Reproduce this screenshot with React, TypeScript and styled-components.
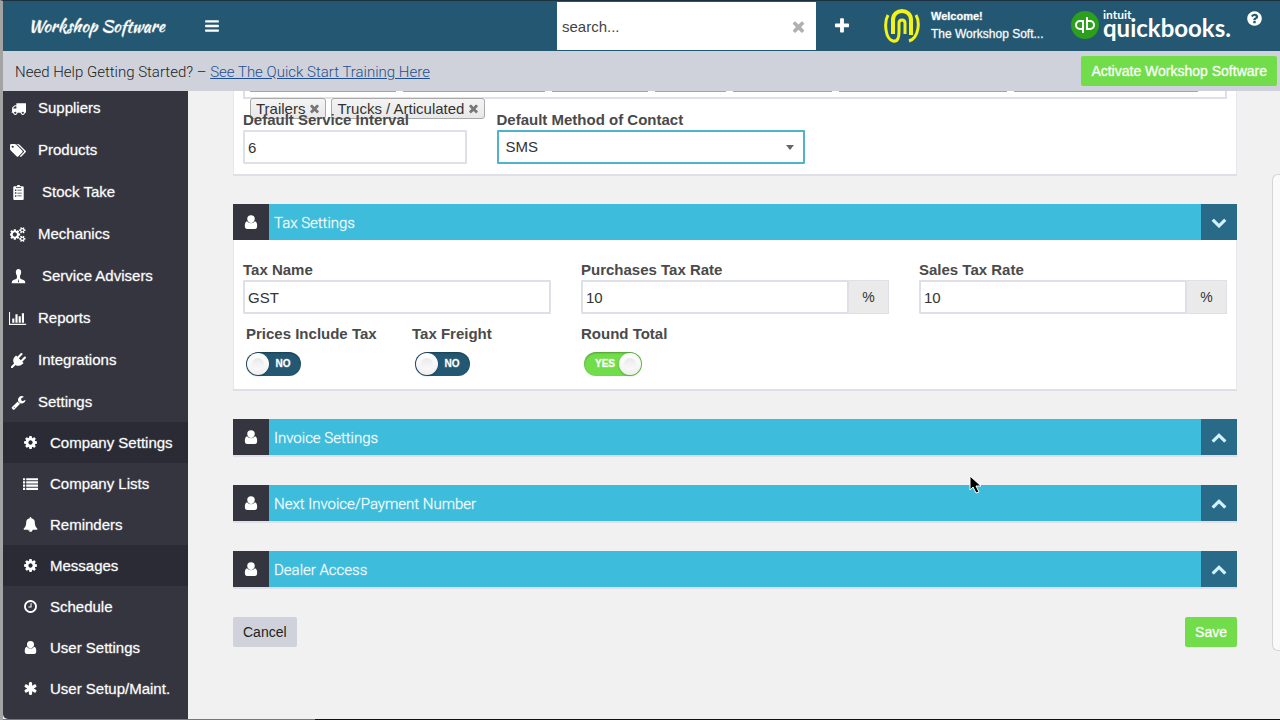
import React, { useState } from "react";
import styled, { createGlobalStyle } from "styled-components";

const c = {
  navy: "#245872",
  bar: "#cfd2da",
  side: "#353540",
  sideDark: "#2a2b35",
  page: "#f1f1f1",
  cyan: "#3dbcdb",
  teal: "#286a87",
  green: "#72dd4a",
  border: "#dfdfe7",
  label: "#4a4a4a",
};

const sans = `"Helvetica Neue", "Liberation Sans", Arial, sans-serif`;
const light = `Roboto, "Liberation Sans", sans-serif`;
/* thickens white text on dark grounds to a medium weight */
const medium = `-webkit-text-stroke: 1px rgba(255, 255, 255, 0.3);`;

const Global = createGlobalStyle`
  *, *::before, *::after { box-sizing: border-box; }
  body { margin: 0; font: 15px/20px ${sans}; color: #333; background: ${c.page}; }
  button, input, select { font: inherit; color: inherit; }
  button { border: 0; padding: 0; cursor: pointer; background: none; }
  svg { flex: none; }
`;

/* ---------- icons ---------- */

const paths: Record<string, string> = {
  user: "M896 130a420 420 0 0 1 420 430q0 190-130 310a420 420 0 0 1-580 0q-130-120-130-310a420 420 0 0 1 420-430zM450 800q180 240 446 240t446-240q244 60 244 520q0 360-256 360h-868q-256 0-256-360q0-460 244-520z",
  bars: "M1664 1344v128q0 26-19 45t-45 19h-1408q-26 0-45-19t-19-45v-128q0-26 19-45t45-19h1408q26 0 45 19t19 45zm0-512v128q0 26-19 45t-45 19h-1408q-26 0-45-19t-19-45v-128q0-26 19-45t45-19h1408q26 0 45 19t19 45zm0-512v128q0 26-19 45t-45 19h-1408q-26 0-45-19t-19-45v-128q0-26 19-45t45-19h1408q26 0 45 19t19 45z",
  plus: "M1600 736v192q0 40-28 68t-68 28h-416v416q0 40-28 68t-68 28h-192q-40 0-68-28t-28-68v-416h-416q-40 0-68-28t-28-68v-192q0-40 28-68t68-28h416v-416q0-40 28-68t68-28h192q40 0 68 28t28 68v416h416q40 0 68 28t28 68z",
  times: "M1490 1322q0 40-28 68l-136 136q-28 28-68 28t-68-28l-294-294-294 294q-28 28-68 28t-68-28l-136-136q-28-28-28-68t28-68l294-294-294-294q-28-28-28-68t28-68l136-136q28-28 68-28t68 28l294 294 294-294q28-28 68-28t68 28l136 136q28 28 28 68t-28 68l-294 294 294 294q28 28 28 68z",
  help: "M1024 1376v-192q0-14-9-23t-23-9h-192q-14 0-23 9t-9 23v192q0 14 9 23t23 9h192q14 0 23-9t9-23zm256-672q0-88-55.5-163t-138.5-116-170-41q-243 0-371 213-15 24 8 42l132 100q7 6 19 6 16 0 25-12 53-68 86-92 34-24 86-24 48 0 85.5 26t37.5 59q0 38-20 61t-68 45q-63 28-115.5 86.5t-52.5 125.5v36q0 14 9 23t23 9h192q14 0 23-9t9-23q0-19 21.5-49.5t54.5-49.5q32-18 49-28.5t46-35 44.5-48 28-60.5 12.5-81zm384 192q0 209-103 385.5t-279.5 279.5-385.5 103-385.5-103-279.5-279.5-103-385.5 103-385.5 279.5-279.5 385.5-103 385.5 103 279.5 279.5 103 385.5z",
  cog: "M1152 896q0-106-75-181t-181-75-181 75-75 181 75 181 181 75 181-75 75-181zm512-109v222q0 12-8 23t-20 13l-185 28q-19 54-39 91 35 50 107 138 10 12 10 25t-9 23q-27 37-99 108t-94 71q-12 0-26-9l-138-108q-44 23-91 38-16 136-29 186-7 28-36 28h-222q-14 0-24.5-8.5t-11.5-21.5l-28-184q-49-16-90-37l-141 107q-10 9-25 9-14 0-25-11-126-114-165-168-7-10-7-23 0-12 8-23 15-21 51-66.5t54-70.5q-27-50-41-99l-183-27q-13-2-21-12.5t-8-23.5v-222q0-12 8-23t19-13l186-28q14-46 39-92-40-57-107-138-10-12-10-24 0-10 9-23 26-36 98.5-107.5t94.5-71.5q13 0 26 10l138 107q44-23 91-38 16-136 29-186 7-28 36-28h222q14 0 24.5 8.5t11.5 21.5l28 184q49 16 90 37l142-107q9-9 24-9 13 0 25 10 129 119 165 170 7 8 7 22 0 12-8 23-15 21-51 66.5t-54 70.5q26 50 41 98l183 28q13 2 21 12.5t8 23.5z",
  truck: "M640 1408q0-52-38-90t-90-38-90 38-38 90 38 90 90 38 90-38 38-90zm-384-512h384v-256h-158q-13 0-22 9l-195 195q-9 9-9 22v30zm1280 512q0-52-38-90t-90-38-90 38-38 90 38 90 90 38 90-38 38-90zm256-1088v1024q0 15-4 26.5t-13.5 18.5-16.5 11.5-23.5 6-22.5 2-25.5 0-22.5-.5q0 106-75 181t-181 75-181-75-75-181h-384q0 106-75 181t-181 75-181-75-75-181h-64q-3 0-22.5.5t-25.5 0-22.5-2-23.5-6-16.5-11.5-13.5-18.5-4-26.5q0-26 19-45t45-19v-320q0-8-.5-35t0-38 2.5-34.5 6.5-37 14-30.5 22.5-30l198-198q19-19 50.5-32t58.5-13h160v-192q0-26 19-45t45-19h1024q26 0 45 19t19 45z",
  tags: "M448 448q0-53-37.5-90.5t-90.5-37.5-90.5 37.5-37.5 90.5 37.5 90.5 90.5 37.5 90.5-37.5 37.5-90.5zm1067 576q0 53-37 90l-491 492q-39 37-91 37-53 0-90-37l-715-716q-38-37-64.5-101t-26.5-117v-416q0-52 38-90t90-38h416q53 0 117 26.5t102 64.5l715 714q37 39 37 91zm384 0q0 53-37 90l-491 492q-39 37-91 37-36 0-59-14t-53-45l470-470q37-37 37-90 0-52-37-91l-715-714q-38-38-102-64.5t-117-26.5h224q53 0 117 26.5t102 64.5l715 714q37 39 37 91z",
  cogs: "M832 896q0-106-75-181t-181-75-181 75-75 181 75 181 181 75 181-75 75-181zm768 512q0-52-38-90t-90-38-90 38-38 90q0 53 37.5 90.5t90.5 37.5 90.5-37.5 37.5-90.5zm0-1024q0-52-38-90t-90-38-90 38-38 90q0 53 37.5 90.5t90.5 37.5 90.5-37.5 37.5-90.5zm-384 421v185q0 10-7 19.5t-16 10.5l-155 24q-11 35-32 76 34 48 90 115 7 10 7 20 0 12-7 19-23 30-82.5 89.5t-78.5 59.5q-11 0-21-7l-115-90q-37 19-77 31-11 108-23 155-7 24-30 24h-186q-11 0-20-7.5t-10-17.5l-23-153q-34-10-75-31l-118 89q-7 7-20 7-11 0-21-8-144-133-144-160 0-9 7-19 10-14 41-53t47-61q-23-44-35-82l-152-24q-10-1-17-9.5t-7-19.5v-185q0-10 7-19.5t16-10.5l155-24q11-35 32-76-34-48-90-115-7-11-7-20 0-12 7-20 22-30 82-89t79-59q11 0 21 7l115 90q34-18 77-32 11-108 23-154 7-24 30-24h186q11 0 20 7.5t10 17.5l23 153q34 10 75 31l118-89q8-7 20-7 11 0 21 8 144 133 144 160 0 9-7 19-12 16-42 54t-45 60q23 48 34 82l152 23q10 2 17 10.5t7 19.5zm640 533v140q0 16-149 31-12 27-30 52 51 113 51 138 0 4-4 7-122 71-124 71-8 0-46-47t-52-68q-20 2-30 2t-30-2q-14 21-52 68t-46 47q-2 0-124-71-4-3-4-7 0-25 51-138-18-25-30-52-149-15-149-31v-140q0-16 149-31 13-29 30-52-51-113-51-138 0-4 4-7 4-2 35-20t59-34 30-16q8 0 46 46.5t52 67.5q20-2 30-2t30 2q51-71 92-112l6-2q4 0 124 70 4 3 4 7 0 25-51 138 17 23 30 52 149 15 149 31zm0-1024v140q0 16-149 31-12 27-30 52 51 113 51 138 0 4-4 7-122 71-124 71-8 0-46-47t-52-68q-20 2-30 2t-30-2q-14 21-52 68t-46 47q-2 0-124-71-4-3-4-7 0-25 51-138-18-25-30-52-149-15-149-31v-140q0-16 149-31 13-29 30-52-51-113-51-138 0-4 4-7 4-2 35-20t59-34 30-16q8 0 46 46.5t52 67.5q20-2 30-2t30 2q51-71 92-112l6-2q4 0 124 70 4 3 4 7 0 25-51 138 17 23 30 52 149 15 149 31z",
  chart: "M640 896v512h-256v-512h256zm384-512v1024h-256v-1024h256zm1024 1152v128h-2048v-1536h128v1408h1920zm-640-896v768h-256v-768h256zm384-384v1152h-256v-1152h256z",
  plug: "M1755 453q37 38 37 90.5t-37 90.5l-401 400 150 150-160 160q-163 163-389.5 186.5t-411.5-100.5l-362 362h-181v-181l362-362q-124-185-100.5-411.5t186.5-389.5l160-160 150 150 400-401q38-37 91-37t90 37 37 90.5-37 90.5l-400 401 234 234 401-400q38-37 91-37t90 37z",
  wrench: "M448 1472q0-26-19-45t-45-19-45 19-19 45 19 45 45 19 45-19 19-45zm644-420l-682 682q-37 37-90 37-52 0-91-37l-106-108q-38-36-38-90 0-53 38-91l681-681q39 98 114.5 173.5t173.5 114.5zm634-435q0 39-23 106-47 134-164.5 217.5t-258.5 83.5q-185 0-316.5-131.5t-131.5-316.5 131.5-316.5 316.5-131.5q58 0 121.5 16.5t107.5 46.5q16 11 16 28t-16 28l-293 169v224l193 107q5-3 79-48.5t135.5-81 70.5-35.5q15 0 23.5 10t8.5 25z",
  list: "M0 256h256v256h-256zM384 256h1408v256h-1408zM0 640h256v256h-256zM384 640h1408v256h-1408zM0 1024h256v256h-256zM384 1024h1408v256h-1408zM0 1408h256v256h-256zM384 1408h1408v256h-1408z",
  bell: "M912 1696q0-16-16-16-59 0-101.5-42.5t-42.5-101.5q0-16-16-16t-16 16q0 73 51.5 124.5t124.5 51.5q16 0 16-16zm816-288q0 52-38 90t-90 38h-448q0 106-75 181t-181 75-181-75-75-181h-448q-52 0-90-38t-38-90q50-42 91-88t85-119.5 74.5-158.5 50-206 19.5-260q0-152 117-282.5t307-158.5q-8-19-8-39 0-40 28-68t68-28 68 28 28 68q0 20-8 39 190 28 307 158.5t117 282.5q0 139 19.5 260t50 206 74.5 158.5 85 119.5 91 88z",
  clock: "M1024 544v448q0 14-9 23t-23 9h-320q-14 0-23-9t-9-23v-64q0-14 9-23t23-9h224v-352q0-14 9-23t23-9h64q14 0 23 9t9 23zm416 352q0-148-73-273t-198-198-273-73-273 73-198 198-73 273 73 273 198 198 273 73 273-73 198-198 73-273zm224 0q0 209-103 385.5t-279.5 279.5-385.5 103-385.5-103-279.5-279.5-103-385.5 103-385.5 279.5-279.5 385.5-103 385.5 103 279.5 279.5 103 385.5z",
  asterisk: "M1546 1050q46 26 59.5 77.5t-12.5 97.5l-64 110q-26 46-77.5 59.5t-97.5-12.5l-266-153v307q0 52-38 90t-90 38h-128q-52 0-90-38t-38-90v-307l-266 153q-46 26-97.5 12.5t-77.5-59.5l-64-110q-26-46-12.5-97.5t59.5-77.5l266-154-266-154q-46-26-59.5-77.5t12.5-97.5l64-110q26-46 77.5-59.5t97.5 12.5l266 153v-307q0-52 38-90t90-38h128q52 0 90 38t38 90v307l266-153q46-26 97.5-12.5t77.5 59.5l64 110q26 46 12.5 97.5t-59.5 77.5l-266 154z",
  down: "M1683 808l-742 741q-19 19-45 19t-45-19l-742-741q-19-19-19-45.5t19-45.5l166-165q19-19 45-19t45 19l531 531 531-531q19-19 45-19t45 19l166 165q19 19 19 45.5t-19 45.5z",
  up: "M1683 1331l-166 165q-19 19-45 19t-45-19l-531-531-531 531q-19 19-45 19t-45-19l-166-165q-19-19-19-45.5t19-45.5l742-741q19-19 45-19t45 19l742 741q19 19 19 45.5t-19 45.5z",
  clipboard:
    "M740 0h312v150h340q128 0 128 128v1386q0 128-128 128h-992q-128 0-128-128v-1386q0-128 128-128h340zM600 230v110h592v-110zM470 540v170h170v-170zM760 580v90h520v-90zM470 880v170h170v-170zM760 920v90h520v-90zM470 1220v170h170v-170zM760 1260v90h520v-90z",
  adviser:
    "M896 0q330 20 320 400q-20 280-130 400q-30 160 20 330q100 110 400 190q200 70 206 380h-1632q6-310 206-380q300-80 400-190q50-170 20-330q-110-120-130-400q-10-380 320-400zM870 1240l-40 340h132l-40-340z",
};

const boxes: Record<string, string> = {
  tags: "0 0 1920 1792",
  cogs: "0 0 1920 1792",
  chart: "0 0 2048 1792",
};

const Icon = ({ name, size = 15 }: { name: string; size?: number }) => (
  <svg height={size} viewBox={boxes[name] ?? "0 0 1792 1792"} fill="currentColor" fillRule="evenodd" aria-hidden="true">
    <path d={paths[name]} />
  </svg>
);

/* ---------- frame ---------- */

const Page = styled.div`
  height: 100vh;
  display: flex;
  flex-direction: column;
  overflow: hidden;
  border-top: 1px solid #1c3040;
  border-left: 3px solid #a3a3a3;
`;

const BottomEdge = styled.div`
  flex: none;
  height: 1px;
  background: linear-gradient(to right, #777 312px, #111 312px);
`;

const Header = styled.header`
  flex: none;
  height: 50px;
  display: flex;
  align-items: center;
  color: #fff;
  background: ${c.navy};
`;

const Brand = styled.a`
  width: 140px;
  margin-left: 25px;
  font: 400 17px/24px "Kaushan Script", Lato, sans-serif;
  color: #fff;
  text-decoration: none;
  white-space: nowrap;
  ${medium}
`;

const IconButton = styled.button`
  display: flex;
  align-items: center;
  justify-content: center;
  width: 16px;
  height: 16px;
`;

const MenuButton = styled(IconButton)`
  margin-left: 36px;
`;

const HeaderRight = styled.div`
  display: flex;
  align-items: center;
  margin-left: auto;
`;

const Search = styled.div`
  display: flex;
  align-items: center;
  width: 259px;
  height: 48px;
  padding: 0 10px 0 5px;
  margin-right: 18px;
  background: #fff;
  color: #b0b0b0;
`;

const SearchInput = styled.input`
  flex: 1;
  min-width: 0;
  padding: 2px 0 0;
  border: 0;
  outline: 0;
  background: none;
  color: #444;
  &::placeholder {
    color: #444;
    opacity: 1;
  }
`;

const Account = styled.div`
  display: flex;
  align-items: center;
  gap: 11px;
  width: 169px;
  margin-left: 34px;
`;

const AccountText = styled.div`
  padding-bottom: 2px;
  font-size: 12px;
  line-height: 18px;
  ${medium}
  strong {
    display: block;
    font-size: 11px;
  }
`;

const QuickBooks = styled.div`
  display: flex;
  align-items: center;
  gap: 4px;
  width: 160px;
  margin-left: 18px;
  padding-bottom: 2px;
  font-family: Lato, sans-serif;
`;

const QbWords = styled.div`
  display: flex;
  flex-direction: column;
  small {
    font-size: 12px;
    line-height: 14px;
    font-weight: 700;
  }
  b {
    font-size: 24px;
    line-height: 12px;
    padding-bottom: 8px;
  }
`;

const HelpButton = styled(IconButton)`
  align-self: flex-start;
  margin: 8px 18px 0 15px;
`;

const HelpBar = styled.div`
  flex: none;
  height: 40px;
  display: flex;
  align-items: center;
  justify-content: space-between;
  padding: 0 3px 0 12px;
  background: ${c.bar};
`;

const HelpText = styled.p`
  margin: 0;
  padding-top: 1px;
  font: 300 15px/20px ${light};
  color: #222;
  a {
    color: #1f4f91;
  }
`;

const Button = styled.button<{ $kind?: "go" }>`
  height: 30px;
  padding: 0 10px;
  border-radius: 2px;
  font-size: 14px;
  color: ${(p) => (p.$kind ? "#fff" : "#222")};
  background: ${(p) => (p.$kind ? c.green : "#d0d2db")};
  ${(p) => (p.$kind ? medium : "")}
`;

const Body = styled.div`
  flex: 1;
  min-height: 0;
  display: flex;
`;

/* ---------- sidebar ---------- */

const Sidebar = styled.nav`
  flex: none;
  width: 185px;
  overflow: hidden;
  background: ${c.side};
  border-bottom-left-radius: 5px;
`;

const NavList = styled.ul`
  list-style: none;
  margin: -4px 0 0;
  padding: 0;
`;

const SubList = styled(NavList)`
  margin: -1px 0 0;
`;

const NavLink = styled.a<{ $sub?: boolean; $dark?: boolean; $wide?: boolean }>`
  display: flex;
  align-items: center;
  gap: ${(p) => (p.$wide ? 12 : 8)}px;
  height: ${(p) => (p.$sub ? 41 : 42)}px;
  padding-left: ${(p) => (p.$sub ? 15 : 3)}px;
  color: #fff;
  text-decoration: none;
  white-space: nowrap;
  background: ${(p) => (p.$dark ? c.sideDark : "transparent")};
  ${medium}
`;

const NavIcon = styled.span`
  display: flex;
  justify-content: center;
  width: 24px;
`;

type NavEntry = { icon: string; text: string; dark?: boolean; wide?: boolean };

const mainNav: NavEntry[] = [
  { icon: "truck", text: "Suppliers" },
  { icon: "tags", text: "Products" },
  { icon: "clipboard", text: "Stock Take", wide: true },
  { icon: "cogs", text: "Mechanics" },
  { icon: "adviser", text: "Service Advisers", wide: true },
  { icon: "chart", text: "Reports" },
  { icon: "plug", text: "Integrations" },
  { icon: "wrench", text: "Settings" },
];

const settingsNav: NavEntry[] = [
  { icon: "cog", text: "Company Settings", dark: true },
  { icon: "list", text: "Company Lists" },
  { icon: "bell", text: "Reminders" },
  { icon: "cog", text: "Messages", dark: true },
  { icon: "clock", text: "Schedule" },
  { icon: "user", text: "User Settings" },
  { icon: "asterisk", text: "User Setup/Maint." },
];

const NavItems = ({ items, sub }: { items: NavEntry[]; sub?: boolean }) => (
  <>
    {items.map((n) => (
      <li key={n.text}>
        <NavLink href="#" $sub={sub} $dark={n.dark} $wide={n.wide}>
          <NavIcon><Icon name={n.icon} /></NavIcon>
          {n.text}
        </NavLink>
      </li>
    ))}
  </>
);

/* ---------- content ---------- */

const Main = styled.main`
  flex: 1;
  min-width: 0;
  padding: 0 35px 0 45px;
  display: flex;
  flex-direction: column;
  gap: 28px;
  overflow: hidden;
`;

const ScrollThumb = styled.div`
  flex: none;
  width: 8px;
  height: 477px;
  margin-top: 83px;
  border: 1px solid #d5d5d5;
  border-right: 0;
  border-radius: 6px 0 0 6px;
  background: #fafafa;
`;

const Panel = styled.section`
  border-bottom: 2px solid ${c.border};
`;

const PanelHead = styled.header`
  display: flex;
  height: 36px;
  color: #fff;
  background: ${c.cyan};
`;

const HeadIcon = styled.span`
  display: flex;
  align-items: center;
  justify-content: center;
  width: 36px;
  background: ${c.side};
`;

const PanelTitle = styled.h2`
  flex: 1;
  margin: 0;
  padding-left: 5px;
  font: 300 15px/38px ${light};
  ${medium}
`;

const Collapse = styled.button`
  display: flex;
  align-items: center;
  justify-content: center;
  width: 36px;
  color: #d3f1fc;
  background: ${c.teal};
`;

const PanelBody = styled.div<{ $pad: string }>`
  padding: ${(p) => p.$pad};
  background: #fff;
  box-shadow: inset 1px 0 #e6e6ec, inset -1px 0 #e6e6ec;
`;

const TagBox = styled.div`
  height: 8px;
  padding: 0 5px;
  border: 2px solid ${c.border};
  border-top: 0;
`;

const TagRow = styled.div`
  display: flex;
  gap: 5px;
`;

const EdgeRow = styled(TagRow)`
  gap: 7px;
  height: 7px;
`;

const TagEdge = styled.span<{ $w: number }>`
  width: ${(p) => p.$w}px;
  height: 1px;
  background: #a5a5a8;
`;

const Tag = styled.span`
  display: flex;
  align-items: center;
  gap: 3px;
  height: 21px;
  padding: 0 4px 0 5px;
  border: 1px solid #aaa;
  border-radius: 3px;
  background: linear-gradient(#f4f4f4, #e8e8e8);
  white-space: nowrap;
`;

const TagRemove = styled.button`
  display: flex;
  color: #777;
`;

const Grid = styled.div<{ $top?: number }>`
  display: grid;
  grid-template-columns: repeat(12, minmax(0, 1fr));
  column-gap: 30px;
  margin-top: ${(p) => p.$top ?? 0}px;
`;

const Field = styled.div<{ $span: number }>`
  grid-column: span ${(p) => p.$span};
  position: relative;
`;

const Label = styled.label<{ $inset?: boolean }>`
  display: block;
  padding-left: ${(p) => (p.$inset ? 3 : 0)}px;
  font-weight: 700;
  line-height: 20px;
  color: ${c.label};
  white-space: nowrap;
`;

const Input = styled.input`
  display: block;
  width: 100%;
  min-width: 0;
  height: 34px;
  padding: 0 3px;
  border: 2px solid ${c.border};
  border-radius: 1px;
  outline: 0;
  background: #fff;
`;

const SelectWrap = styled.div`
  position: relative;
  &::after {
    content: "";
    position: absolute;
    right: 11px;
    top: 15px;
    border: 4px solid transparent;
    border-top: 5px solid #666;
    border-bottom: 0;
    pointer-events: none;
  }
`;

const Select = styled.select`
  display: block;
  width: 100%;
  height: 34px;
  padding: 0 7px;
  appearance: none;
  border: 2px solid #4fb3c9;
  border-radius: 1px;
  outline: 0;
  background: #fff;
`;

const InputGroup = styled.div`
  display: flex;
`;

const Addon = styled.span`
  flex: none;
  width: 40px;
  height: 34px;
  font-size: 14px;
  line-height: 32px;
  text-align: center;
  border: 1px solid ${c.border};
  border-left: 0;
  background: #eaeaea;
`;

const Switch = styled.label<{ $on: boolean }>`
  position: relative;
  display: flex;
  flex-direction: ${(p) => (p.$on ? "row-reverse" : "row")};
  align-items: center;
  width: ${(p) => (p.$on ? 58 : 55)}px;
  height: 24px;
  margin: 8px 0 0 3px;
  border-radius: 12px;
  font: 700 10px/24px ${sans};
  color: #fff;
  background: ${(p) => (p.$on ? c.green : c.navy)};
  box-shadow: inset 0 1px 2px rgba(0, 0, 0, 0.3);
  cursor: pointer;
  ${medium}
`;

const SwitchInput = styled.input`
  position: absolute;
  inset: 0;
  margin: 0;
  opacity: 0;
`;

const Knob = styled.span`
  display: flex;
  align-items: center;
  justify-content: center;
  width: 22px;
  height: 22px;
  margin: 0 1px;
  border-radius: 50%;
  background: linear-gradient(#fff, #f0f0f0);
  box-shadow: 0 1px 2px rgba(0, 0, 0, 0.25);
  &::after {
    content: "";
    width: 12px;
    height: 12px;
    border-radius: 50%;
    background: linear-gradient(#e9e9e9, #fafafa);
  }
`;

const SwitchText = styled.span<{ $on: boolean }>`
  flex: 1;
  padding: ${(p) => (p.$on ? "0 0 0 8px" : "0 5px 0 0")};
  text-align: center;
`;

const Actions = styled.div`
  display: flex;
  justify-content: space-between;
`;

const Pointer = styled.svg`
  position: absolute;
  left: 969px;
  top: 475px;
`;

const YesNo = ({ id, label, initial, inset }: { id: string; label: string; initial: boolean; inset?: boolean }) => {
  const [on, setOn] = useState(initial);
  return (
    <>
      <Label htmlFor={id} $inset={inset}>{label}</Label>
      <Switch $on={on}>
        <SwitchInput id={id} type="checkbox" checked={on} onChange={() => setOn(!on)} />
        <Knob />
        <SwitchText $on={on}>{on ? "YES" : "NO"}</SwitchText>
      </Switch>
    </>
  );
};

const Head = ({ title, open }: { title: string; open?: boolean }) => (
  <PanelHead>
    <HeadIcon><Icon name="user" size={16} /></HeadIcon>
    <PanelTitle>{title}</PanelTitle>
    <Collapse type="button" aria-label={`Toggle ${title}`}>
      <Icon name={open ? "down" : "up"} size={16} />
    </Collapse>
  </PanelHead>
);

const hiddenTagWidths = [146, 142, 96, 71, 99, 168, 184];

export default function App() {
  return (
    <Page>
      <Global />
      <Header>
        <Brand href="#">Workshop Software</Brand>
        <MenuButton type="button" aria-label="Menu"><Icon name="bars" size={16} /></MenuButton>
        <HeaderRight>
          <Search>
            <SearchInput type="text" placeholder="search..." aria-label="Search" />
            <IconButton type="button" aria-label="Clear search"><Icon name="times" size={17} /></IconButton>
          </Search>
          <IconButton type="button" aria-label="Add"><Icon name="plus" size={18} /></IconButton>
          <Account>
            <svg width="36" height="36" viewBox="0 0 36 36" fill="none" stroke="#f3f314" aria-hidden="true">
              <path strokeWidth="3" d="M4 7C0 14 1 31 9 33C14 34 15 29 15 24V15C15 11 21 11 21 15V26" />
              <path strokeWidth="4" d="M9 26V12C9 0 27 0 27 12V27" />
              <path strokeWidth="3" d="M32 7C36 14 35 30 25 33" />
            </svg>
            <AccountText>
              <strong>Welcome!</strong>
              The Workshop Soft...
            </AccountText>
          </Account>
          <QuickBooks>
            <svg width="28" height="28" viewBox="0 0 28 28" fill="none" stroke="#fff" strokeWidth="2" aria-hidden="true">
              <circle cx="14" cy="14" r="14" fill="#2ca01c" stroke="none" />
              <path d="M12 10H9a4 4 0 0 0 0 8h3M12 9v13M16 18h3a4 4 0 0 0 0-8h-3M16 19V6" />
            </svg>
            <QbWords>
              <small>intuit</small>
              <b>quickbooks.</b>
            </QbWords>
          </QuickBooks>
          <HelpButton type="button" aria-label="Help"><Icon name="help" size={17} /></HelpButton>
        </HeaderRight>
      </Header>

      <HelpBar>
        <HelpText>
          Need Help Getting Started? – <a href="#">See The Quick Start Training Here</a>
        </HelpText>
        <Button type="button" $kind="go">Activate Workshop Software</Button>
      </HelpBar>

      <Body>
        <Sidebar>
          <NavList>
            <NavItems items={mainNav} />
            <li>
              <SubList>
                <NavItems items={settingsNav} sub />
              </SubList>
            </li>
          </NavList>
        </Sidebar>

        <Main>
          <Panel>
            <PanelBody $pad="0 10px 10px">
              <TagBox>
                <EdgeRow>
                  {hiddenTagWidths.map((w) => <TagEdge key={w} $w={w} />)}
                </EdgeRow>
                <TagRow>
                  {["Trailers", "Trucks / Articulated"].map((t) => (
                    <Tag key={t}>
                      {t}
                      <TagRemove type="button" aria-label={`Remove ${t}`}><Icon name="times" size={13} /></TagRemove>
                    </Tag>
                  ))}
                </TagRow>
              </TagBox>
              <Grid $top={11}>
                <Field $span={3}>
                  <Label htmlFor="interval">Default Service Interval</Label>
                  <Input id="interval" defaultValue="6" />
                </Field>
                <Field $span={4}>
                  <Label htmlFor="contact">Default Method of Contact</Label>
                  <SelectWrap>
                    <Select id="contact" defaultValue="SMS">
                      <option>SMS</option>
                    </Select>
                  </SelectWrap>
                </Field>
              </Grid>
            </PanelBody>
          </Panel>

          <Panel>
            <Head title="Tax Settings" open />
            <PanelBody $pad="20px 10px 13px">
              <Grid>
                <Field $span={4}>
                  <Label htmlFor="taxname">Tax Name</Label>
                  <Input id="taxname" defaultValue="GST" />
                </Field>
                <Field $span={4}>
                  <Label htmlFor="purchases">Purchases Tax Rate</Label>
                  <InputGroup>
                    <Input id="purchases" defaultValue="10" />
                    <Addon>%</Addon>
                  </InputGroup>
                </Field>
                <Field $span={4}>
                  <Label htmlFor="sales">Sales Tax Rate</Label>
                  <InputGroup>
                    <Input id="sales" defaultValue="10" />
                    <Addon>%</Addon>
                  </InputGroup>
                </Field>
              </Grid>
              <Grid $top={10}>
                <Field $span={2}><YesNo id="include" label="Prices Include Tax" initial={false} inset /></Field>
                <Field $span={2}><YesNo id="freight" label="Tax Freight" initial={false} /></Field>
                <Field $span={2}><YesNo id="round" label="Round Total" initial /></Field>
              </Grid>
            </PanelBody>
          </Panel>

          <Panel><Head title="Invoice Settings" /></Panel>
          <Panel><Head title="Next Invoice/Payment Number" /></Panel>
          <Panel><Head title="Dealer Access" /></Panel>

          <Actions>
            <Button type="button">Cancel</Button>
            <Button type="button" $kind="go">Save</Button>
          </Actions>
        </Main>
        <ScrollThumb />
      </Body>
      <BottomEdge />

      <Pointer width="14" height="20" viewBox="0 0 14 20" aria-hidden="true">
        <path d="M1 1v14l3-3 3 6 3-1-3-6h5z" fill="#000" stroke="#fff" />
      </Pointer>
    </Page>
  );
}
